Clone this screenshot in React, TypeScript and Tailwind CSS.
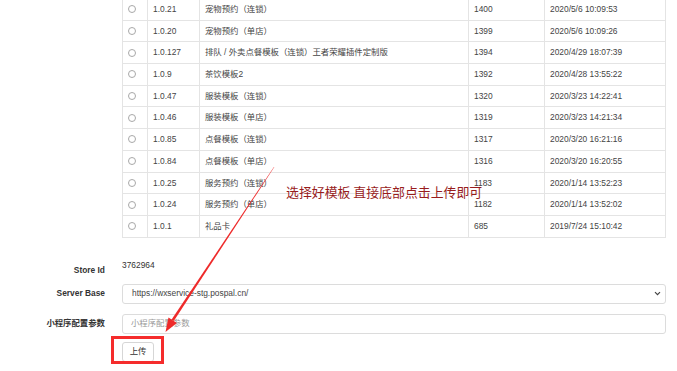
import React from "react";

const rows: [string, string, string, string][] = [
  ["1.0.21", "宠物预约（连锁）", "1400", "2020/5/6 10:09:53"],
  ["1.0.20", "宠物预约（单店）", "1399", "2020/5/6 10:09:26"],
  ["1.0.127", "排队 / 外卖点餐模板（连锁）王者荣耀插件定制版", "1394", "2020/4/29 18:07:39"],
  ["1.0.9", "茶饮模板2", "1392", "2020/4/28 13:55:22"],
  ["1.0.47", "服装模板（连锁）", "1320", "2020/3/23 14:22:41"],
  ["1.0.46", "服装模板（单店）", "1319", "2020/3/23 14:21:34"],
  ["1.0.85", "点餐模板（连锁）", "1317", "2020/3/20 16:21:16"],
  ["1.0.84", "点餐模板（单店）", "1316", "2020/3/20 16:20:55"],
  ["1.0.25", "服务预约（连锁）", "1183", "2020/1/14 13:52:23"],
  ["1.0.24", "服务预约（单店）", "1182", "2020/1/14 13:52:02"],
  ["1.0.1", "礼品卡", "685", "2019/7/24 15:10:42"],
];

export default function App() {
  return (
    <div className="relative w-[677px] h-[371px] overflow-hidden bg-white text-[8.4px] text-[#444] font-['Liberation_Sans','Noto_Sans_CJK_SC',sans-serif]">
      {/* table */}
      <div className="pl-[122px] pr-[11px] mt-[-2px]">
        <div className="border-l border-t border-[#e4e4e4]">
          {rows.map((r, i) => (
            <div key={i} className="flex h-[21.7px] border-b border-[#e4e4e4] items-stretch">
              <div className="w-[25px] shrink-0 border-r border-[#e4e4e4] flex items-center pl-[5px]">
                <div className="w-[8px] h-[8px] rounded-full border border-[#a8a8a8]" />
              </div>
              <div className="w-[52px] shrink-0 border-r border-[#e4e4e4] flex items-center pl-[5px] whitespace-nowrap">{r[0]}</div>
              <div className="w-[269px] shrink-0 border-r border-[#e4e4e4] flex items-center pl-[5px] whitespace-nowrap">{r[1]}</div>
              <div className="w-[76px] shrink-0 border-r border-[#e4e4e4] flex items-center pl-[5px]">{r[2]}</div>
              <div className="flex-1 border-r border-[#e4e4e4] flex items-center pl-[5px] whitespace-nowrap">{r[3]}</div>
            </div>
          ))}
        </div>
      </div>

      {/* form */}
      <div className="pr-[11px]">
        <div className="flex mt-[21px] items-start">
          <div className="w-[105px] shrink-0 text-right font-bold text-[#333] pt-[5px] leading-[12px]">Store Id</div>
          <div className="ml-[17px] leading-[12px] text-[#333]">3762964</div>
        </div>
        <div className="flex mt-[8px] items-center h-[20px]">
          <div className="w-[105px] shrink-0 text-right font-bold text-[#333]">Server Base</div>
          <div className="ml-[17px] flex-1 h-[20px] border border-[#dcdcdc] rounded-[3px] flex items-center justify-between pl-[9px] pr-[4px] text-[#444]">
            <span>https://wxservice-stg.pospal.cn/</span>
            <svg width="7" height="5" viewBox="0 0 7 5">
              <path d="M1 1.2 L3.5 3.7 L6 1.2" fill="none" stroke="#444" strokeWidth="1.2" />
            </svg>
          </div>
        </div>
        <div className="flex mt-[10px] items-center h-[20px]">
          <div className="w-[105px] shrink-0 text-right font-bold text-[#333]">小程序配置参数</div>
          <div className="ml-[17px] flex-1 h-[20px] border border-[#dcdcdc] rounded-[3px] flex items-center pl-[8px] text-[#9a9a9a]">
            小程序配置参数
          </div>
        </div>
        <div className="mt-[8px] ml-[122px] w-[32px] h-[20px] border border-[#d6d6d6] rounded-[3px] flex items-center justify-center text-[#333]">
          上传
        </div>
      </div>

      {/* annotations */}
      <div className="absolute left-[286px] top-[185px] text-[12.9px] leading-[14px] text-[#981c1c] font-['Noto_Sans_CJK_SC',sans-serif] whitespace-nowrap">
        选择好模板 直接底部点击上传即可
      </div>
      <div className="absolute left-[111px] top-[336px] w-[53px] h-[28px] border-[3px] border-[#f52c2c]" />
      <svg className="absolute left-0 top-0 pointer-events-none" width="677" height="371">
        <polygon
          points="274.3,167.1 273.9,166.9 171.6,319.6 173.8,321.0"
          fill="#ee2a2a"
        />
        <polygon points="165.5,332 176.9,323.0 168.5,317.6" fill="#ee2a2a" />
      </svg>
    </div>
  );
}
